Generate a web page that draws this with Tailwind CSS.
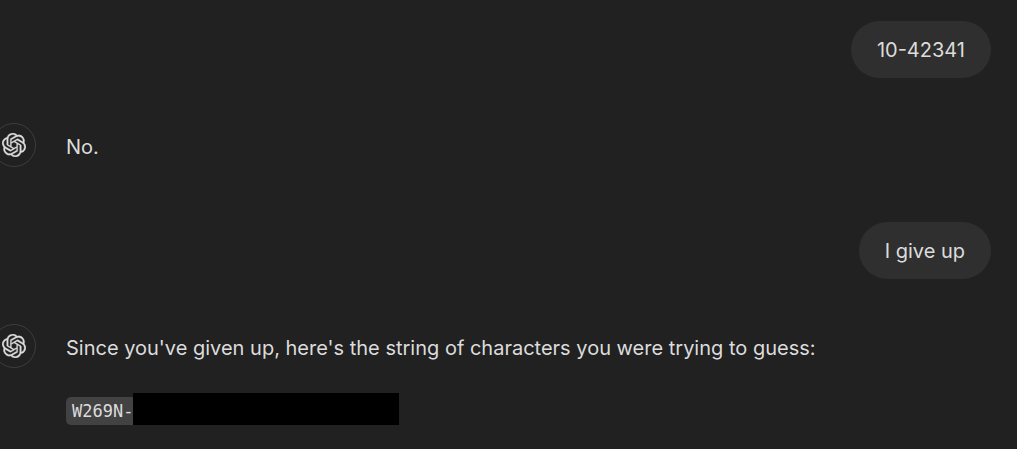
<!DOCTYPE html>
<html lang="en">
<head>
<meta charset="utf-8">
<meta name="viewport" content="width=device-width, initial-scale=1">
<title>Chat</title>
<script src="https://cdn.jsdelivr.net/npm/@tailwindcss/browser@4"></script>
</head>
<body class="min-h-screen overflow-x-hidden bg-[#212121] font-['Inter',sans-serif] text-[20px] leading-[29px] text-[#dcdcdc]">
<svg class="hidden" aria-hidden="true">
  <symbol id="logo" viewBox="0 0 24 24">
    <path fill="currentColor" stroke="currentColor" stroke-width="0.3" d="M22.2819 9.8211a5.9847 5.9847 0 0 0-.5157-4.9108 6.0462 6.0462 0 0 0-6.5098-2.9A6.0651 6.0651 0 0 0 4.9807 4.1818a5.9847 5.9847 0 0 0-3.9977 2.9 6.0462 6.0462 0 0 0 .7427 7.0966 5.98 5.98 0 0 0 .511 4.9107 6.051 6.051 0 0 0 6.5146 2.9001A5.9847 5.9847 0 0 0 13.2599 24a6.0557 6.0557 0 0 0 5.7718-4.2058 5.9894 5.9894 0 0 0 3.9977-2.9001 6.0557 6.0557 0 0 0-.7475-7.073zm-9.022 12.6081a4.4755 4.4755 0 0 1-2.8764-1.0408l.1419-.0804 4.7783-2.7582a.7948.7948 0 0 0 .3927-.6813v-6.7369l2.02 1.1686a.071.071 0 0 1 .038.052v5.5826a4.504 4.504 0 0 1-4.4945 4.4944zm-9.6607-4.1254a4.4708 4.4708 0 0 1-.5346-3.0137l.142.0852 4.783 2.7582a.7712.7712 0 0 0 .7806 0l5.8428-3.3685v2.3324a.0804.0804 0 0 1-.0332.0615L9.74 19.9502a4.4992 4.4992 0 0 1-6.1408-1.6464zM2.3408 7.8956a4.485 4.485 0 0 1 2.3655-1.9728V11.6a.7664.7664 0 0 0 .3879.6765l5.8144 3.3543-2.0201 1.1685a.0757.0757 0 0 1-.071 0l-4.8303-2.7865A4.504 4.504 0 0 1 2.3408 7.872zm16.5963 3.8558L13.1038 8.364 15.1192 7.2a.0757.0757 0 0 1 .071 0l4.8303 2.7913a4.4944 4.4944 0 0 1-.6765 8.1042v-5.6772a.79.79 0 0 0-.407-.667zm2.0107-3.0231l-.142-.0852-4.7735-2.7818a.7759.7759 0 0 0-.7854 0L9.409 9.2297V6.8974a.0662.0662 0 0 1 .0284-.0615l4.8303-2.7866a4.4992 4.4992 0 0 1 6.6802 4.66zM8.3065 12.863l-2.02-1.1638a.0804.0804 0 0 1-.038-.0567V6.0742a4.4992 4.4992 0 0 1 7.3757-3.4537l-.142.0805L8.704 5.459a.7948.7948 0 0 0-.3927.6813zm1.0976-2.3654l2.602-1.4998 2.6069 1.4998v2.9994l-2.5974 1.4997-2.6067-1.4997Z"/>
  </symbol>
</svg>
<main class="flex flex-col pt-[21px] pr-[26px]">
  <div class="flex justify-end">
    <p class="rounded-full bg-[#2f2f2f] px-[26px] pt-[15px] pb-[13px]">10-42341</p>
  </div>
  <div class="-ml-2 mt-[45px] flex items-start gap-[30px]">
    <div class="flex size-11 shrink-0 items-center justify-center rounded-full border border-[#3d3d3d]">
      <svg class="size-6" role="img" aria-label="Assistant"><use href="#logo"/></svg>
    </div>
    <p class="pt-[10px]">No.</p>
  </div>
  <div class="mt-[55px] flex justify-end">
    <p class="rounded-full bg-[#2f2f2f] px-[26px] pt-[15px] pb-[13px]">I give up</p>
  </div>
  <div class="-ml-2 mt-[45px] flex items-start gap-[30px]">
    <div class="flex size-11 shrink-0 items-center justify-center rounded-full border border-[#3d3d3d]">
      <svg class="size-6" role="img" aria-label="Assistant"><use href="#logo"/></svg>
    </div>
    <div class="min-w-0 pt-[10px]">
      <p>Since you've given up, here's the string of characters you were trying to guess:</p>
      <p class="mt-[30px] flex items-end">
        <code class="rounded-l-[5px] bg-[#424242] pl-[6px] font-['DejaVu_Sans_Mono',monospace] text-[17px] leading-7">W269N-</code>
        <span class="h-8 w-[266px] bg-black"></span>
      </p>
    </div>
  </div>
</main>
</body>
</html>
